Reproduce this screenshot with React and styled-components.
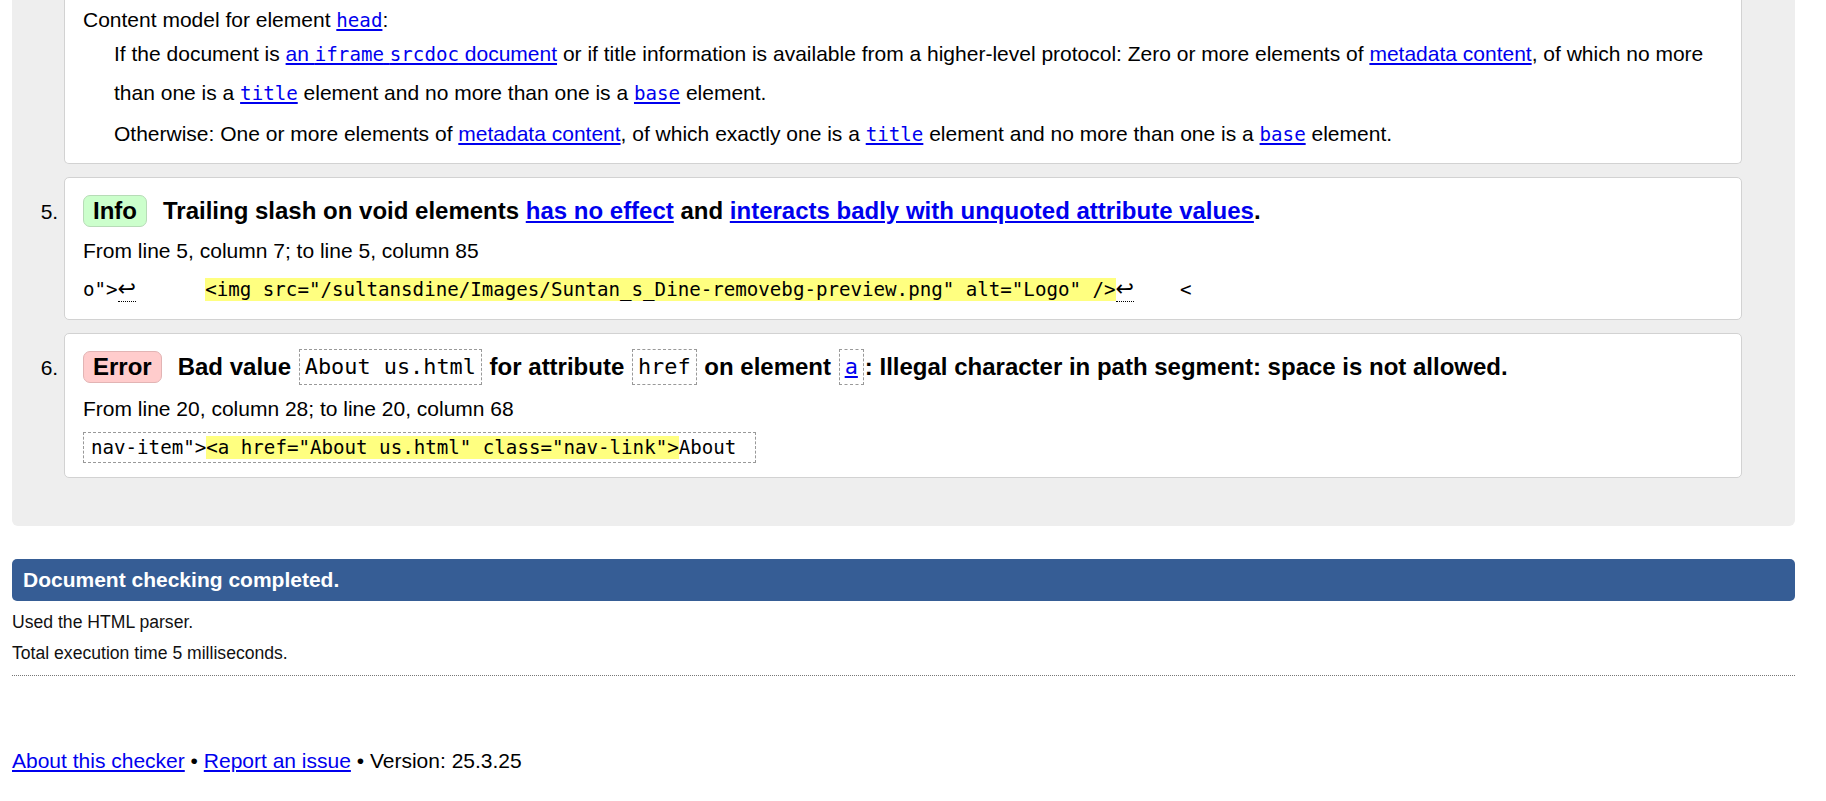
import React from "react";
import styled, { createGlobalStyle, css } from "styled-components";

const GlobalStyle = createGlobalStyle`
  html, body {
    margin: 0;
    padding: 0;
    background: #ffffff;
  }
  body {
    font-family: "Liberation Sans", Arial, sans-serif;
    font-size: 21px;
    color: #000000;
  }
`;

const Page = styled.div`
  margin-left: 12px;
  width: 1783px;
`;

const Results = styled.ol`
  margin: 0;
  padding: 0 53px 48px 52px;
  background: #eeeeee;
  border-radius: 0 0 6px 6px;
  list-style: decimal outside;
`;

const MessageCard = styled.li`
  background: #ffffff;
  border: 1px solid #d2d2d2;
  border-radius: 5px;
  padding: 0 18px 12px 18px;
  margin-bottom: 13px;
  &:last-child {
    margin-bottom: 0;
  }
  ${(p) =>
    p.$clipped &&
    css`
      list-style: none;
      border-top: none;
      border-radius: 0 0 5px 5px;
      padding-top: 8px;
      padding-bottom: 10px;
      margin-bottom: 13px;
    `}
`;

const DefHead = styled.p`
  margin: 0;
  line-height: 24px;
`;

const DefPara = styled.p`
  margin: 2px 0 0 31px;
  line-height: 39px;
`;

const MsgTitle = styled.p`
  margin: 15px 0 0 0;
  font-size: 24px;
  font-weight: bold;
  line-height: 36px;
  white-space: nowrap;
`;

const Location = styled.p`
  margin: 3px 0 0 0;
  line-height: 38px;
`;

const Extract = styled.p`
  margin: -1px 0 0 0;
  line-height: 38px;
`;

const Mono = styled.code`
  font-family: "DejaVu Sans Mono", "Liberation Mono", monospace;
  font-size: 0.912em;
  line-height: 1;
`;

const ExtractCode = styled(Mono)`
  white-space: pre;
  display: inline-block;
  line-height: 23px;
  vertical-align: middle;
  ${(p) =>
    p.$boxed &&
    css`
      border: 1px dashed #999999;
      padding: 3px 7px;
    `}
`;

const Mark = styled.mark`
  background: #ffff80;
  color: inherit;
`;

const Lf = styled.span`
  font-family: "DejaVu Sans", sans-serif;
  font-size: 1.15em;
  border-bottom: 1px dotted #000000;
  line-height: 1;
`;

const Link = styled.a`
  color: #0000ee;
  text-decoration: underline;
`;

const Badge = styled.span`
  display: inline-block;
  box-sizing: border-box;
  height: 32px;
  line-height: 30px;
  padding: 0 9px;
  margin-right: 16px;
  border-radius: 7px;
  border: 1px solid ${(p) => (p.$kind === "error" ? "#e2b4b4" : "#b7dcb7")};
  background: ${(p) => (p.$kind === "error" ? "#ffcccc" : "#ccffcc")};
  font-size: 24px;
  font-weight: bold;
  vertical-align: middle;
  position: relative;
  top: -2px;
`;

const Boxed = styled(Mono)`
  display: inline-block;
  font-weight: normal;
  line-height: 26px;
  padding: 4px 5px;
  margin: 0 1px;
  border: 1px dashed #999999;
  vertical-align: middle;
  position: relative;
  top: -2px;
`;

const StatusBar = styled.p`
  margin: 33px 0 0 0;
  height: 42px;
  line-height: 42px;
  padding: 0 11px;
  background: #365d95;
  color: #ffffff;
  font-weight: bold;
  border-radius: 5px;
`;

const Detail = styled.p`
  margin: ${(p) => p.$top}px 0 0 0;
  font-size: 17.6px;
  line-height: 22px;
  color: #111111;
`;

const Divider = styled.hr`
  margin: 11px 0 0 0;
  border: none;
  border-top: 1px dotted #777777;
  height: 0;
`;

const Footer = styled.p`
  margin: 73px 0 0 0;
  line-height: 24px;
`;

export default function App() {
  return (
    <>
      <GlobalStyle />
      <Page>
        <Results start={4}>
          <MessageCard $clipped>
            <DefHead>
              Content model for element <Link href="#"><Mono>head</Mono></Link>:
            </DefHead>
            <DefPara>
              If the document is{" "}
              <Link href="#">
                an <Mono>iframe</Mono> <Mono>srcdoc</Mono> document
              </Link>{" "}
              or if title information is available from a higher-level protocol: Zero or more
              elements of <Link href="#">metadata content</Link>, of which no more than one is a{" "}
              <Link href="#"><Mono>title</Mono></Link> element and no more than one is a{" "}
              <Link href="#"><Mono>base</Mono></Link> element.
            </DefPara>
            <DefPara>
              Otherwise: One or more elements of <Link href="#">metadata content</Link>, of which
              exactly one is a <Link href="#"><Mono>title</Mono></Link> element and no more than one
              is a <Link href="#"><Mono>base</Mono></Link> element.
            </DefPara>
          </MessageCard>

          <MessageCard>
            <MsgTitle>
              <Badge $kind="info">Info</Badge>Trailing slash on void elements{" "}
              <Link href="#">has no effect</Link> and{" "}
              <Link href="#">interacts badly with unquoted attribute values</Link>.
            </MsgTitle>
            <Location>From line 5, column 7; to line 5, column 85</Location>
            <Extract>
              <ExtractCode>
                {'o">'}
                <Lf>↩</Lf>
                {"      "}
                <Mark>{'<img src="/sultansdine/Images/Suntan_s_Dine-removebg-preview.png" alt="Logo" />'}</Mark>
                <Lf>↩</Lf>
                {"    <"}
              </ExtractCode>
            </Extract>
          </MessageCard>

          <MessageCard>
            <MsgTitle>
              <Badge $kind="error">Error</Badge>Bad value <Boxed>About us.html</Boxed> for attribute{" "}
              <Boxed>href</Boxed> on element{" "}
              <Boxed>
                <Link href="#">a</Link>
              </Boxed>
              : Illegal character in path segment: space is not allowed.
            </MsgTitle>
            <Location>From line 20, column 28; to line 20, column 68</Location>
            <Extract>
              <ExtractCode $boxed>
                {'nav-item">'}
                <Mark>{'<a href="About us.html" class="nav-link">'}</Mark>
                {"About "}
              </ExtractCode>
            </Extract>
          </MessageCard>
        </Results>

        <StatusBar>Document checking completed.</StatusBar>
        <Detail $top={10}>Used the HTML parser.</Detail>
        <Detail $top={9}>Total execution time 5 milliseconds.</Detail>
        <Divider />
        <Footer>
          <Link href="#">About this checker</Link> • <Link href="#">Report an issue</Link> •
          Version: 25.3.25
        </Footer>
      </Page>
    </>
  );
}
